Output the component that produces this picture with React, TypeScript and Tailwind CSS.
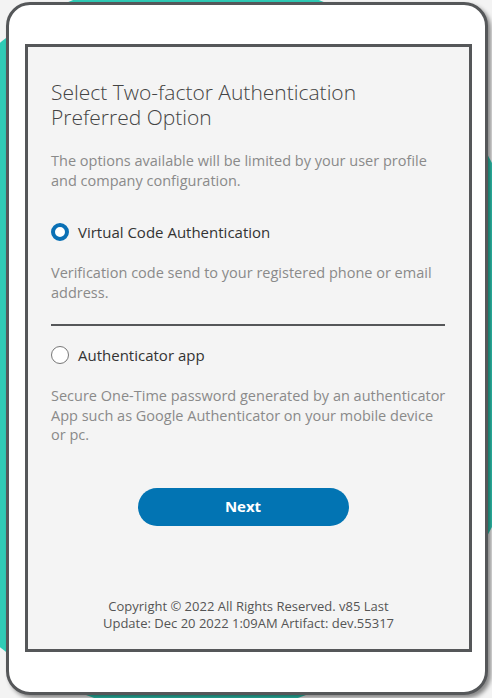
import React from "react";

export default function App() {
  return (
    <div
      className="relative w-[492px] h-[698px] overflow-hidden bg-[#f3f3f3]"
      style={{ fontFamily: '"Open Sans", "Noto Sans", sans-serif' }}
    >
      <div className="absolute left-[-144px] top-[-25px] w-[680px] h-[740px] rounded-[50%] bg-[#30cbb6]" />
      <div className="relative ml-[6px] mt-[2px] w-[482px] h-[693px] rounded-[24px] border-[3px] border-[#555759] bg-white shadow-[3px_3px_4px_rgba(0,0,0,0.45)] pl-[16px] pt-[39px]">
        <div className="w-[447px] h-[608px] border-[3px] border-[#555759] bg-[#f4f4f4] flex flex-col px-[23px] pt-[33px]">
          <h1 className="text-[21px] leading-[25px] font-light text-[#444]">
            Select Two-factor Authentication
            <br />
            Preferred Option
          </h1>
          <p className="mt-[21px] text-[14.5px] leading-[20px] text-[#8a8a8a]">
            The options available will be limited by your user profile and company configuration.
          </p>

          <label className="mt-[31px] flex items-center gap-[9px]">
            <span className="w-[18px] h-[18px] rounded-full border-[4px] border-[#0a70b5] bg-white" />
            <span className="text-[15px] leading-[20px] text-[#333]">Virtual Code Authentication</span>
          </label>
          <p className="mt-[21px] text-[14.5px] leading-[20px] text-[#8a8a8a]">
            Verification code send to your registered phone or email address.
          </p>

          <div className="mt-[21px] h-[2px] bg-[#555759] w-[394px]" />

          <label className="mt-[19px] flex items-center gap-[9px]">
            <span className="w-[18px] h-[18px] rounded-full border-[1.5px] border-[#777] bg-white" />
            <span className="text-[15px] leading-[20px] text-[#333]">Authenticator app</span>
          </label>
          <p className="mt-[21px] text-[14.5px] leading-[19.5px] text-[#8a8a8a]">
            Secure One-Time password generated by an authenticator App such as Google Authenticator on your mobile device or pc.
          </p>

          <button className="mt-[43px] self-center ml-[-11px] w-[211px] h-[38px] rounded-full bg-[#0274b3] text-white text-[15px] font-bold">
            Next
          </button>

          <div className="mt-auto mb-[17px] text-center text-[13px] leading-[17px] text-[#555]">
            Copyright © 2022 All Rights Reserved. v85 Last
            <br />
            Update: Dec 20 2022 1:09AM Artifact: dev.55317
          </div>
        </div>
      </div>
    </div>
  );
}
